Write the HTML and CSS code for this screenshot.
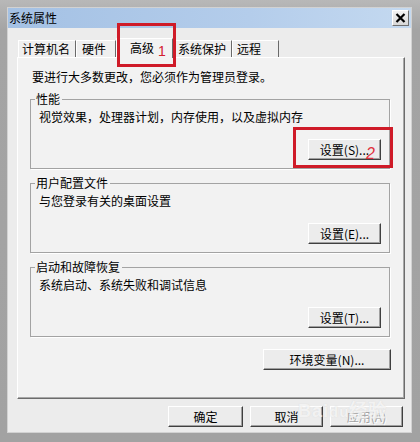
FILE: index.html
```html
<!DOCTYPE html>
<html lang="zh-CN">
<head>
<meta charset="utf-8">
<title>系统属性</title>
<link rel="stylesheet" href="styles.css">
</head>
<body>
<div class="screen">
  <div class="window">
    <div class="titlebar">
      <span class="title">系统属性</span>
      <button class="close" aria-label="关闭"><svg width="11" height="10" viewBox="0 0 11 10"><path d="M1.5 1 L9.5 9 M9.5 1 L1.5 9" stroke="#000" stroke-width="2.2" fill="none"/></svg></button>
    </div>
    <div class="body">
      <div class="tabs">
        <div class="tab t1">计算机名</div>
        <div class="tab t2">硬件</div>
        <div class="tab sel">高级</div>
        <div class="tab t4">系统保护</div>
        <div class="tab t5">远程</div>
      </div>
      <div class="panel">
        <p class="intro">要进行大多数更改，您必须作为管理员登录。</p>
        <fieldset class="group">
          <legend>性能</legend>
          <p class="desc">视觉效果，处理器计划，内存使用，以及虚拟内存</p>
          <div class="btnrow"><button class="btn">设置(S)...</button></div>
        </fieldset>
        <fieldset class="group">
          <legend>用户配置文件</legend>
          <p class="desc">与您登录有关的桌面设置</p>
          <div class="btnrow"><button class="btn">设置(E)...</button></div>
        </fieldset>
        <fieldset class="group">
          <legend>启动和故障恢复</legend>
          <p class="desc">系统启动、系统失败和调试信息</p>
          <div class="btnrow"><button class="btn">设置(T)...</button></div>
        </fieldset>
        <div class="envrow"><button class="btn env">环境变量(N)...</button></div>
      </div>
      <div class="footer">
        <button class="btn ok">确定</button>
        <button class="btn">取消</button>
        <button class="btn" disabled>应用(A)</button>
      </div>
    </div>
  </div>
  <div class="mark mark1"><span class="num">1</span></div>
  <div class="mark mark2"><span class="num two">2</span></div>
  <div class="watermark">Bai<span class="du">du</span>经验</div>
</div>
</body>
</html>
```
FILE: styles.css
```css
* { box-sizing: border-box; }
html, body { margin: 0; padding: 0; }
body {
  width: 420px;
  height: 442px;
  overflow: hidden;
  font-family: "Noto Sans CJK SC", "Noto Sans", sans-serif;
  font-size: 12px;
  color: #000;
  background: #a6a6a6;
}
.screen {
  position: relative;
  width: 420px;
  height: 442px;
  padding: 7px 8px 9px 7px;
  background: linear-gradient(#b8b8b8, #a4a4a4 30px, #a2a2a2);
}
.window {
  height: 426px;
  display: flex;
  flex-direction: column;
  background: #ececec;
  border: 1px solid #d2d2d2;
}
.titlebar {
  height: 20px;
  display: flex;
  align-items: center;
  justify-content: space-between;
  padding: 0 2px 0 1px;
  background: linear-gradient(to right, #a4c1e4, #b4cdeb 60%, #c4d9f0);
}
.title { line-height: 16px; }
.close {
  width: 17px;
  height: 16px;
  padding: 0;
  display: flex;
  align-items: center;
  justify-content: center;
  background: linear-gradient(#f2f2f2, #d8d8d8);
  border: 1px solid;
  border-color: #fff #707070 #707070 #fff;
}
.body {
  flex: 1;
  display: flex;
  flex-direction: column;
  padding: 10px 6px 5px 9px;
}
.tabs {
  height: 19px;
  display: flex;
  align-items: flex-end;
  padding-left: 1px;
}
.tab {
  height: 17px;
  line-height: 16px;
  white-space: nowrap;
  background: #efefef;
  border-top: 1px solid #fff;
  border-left: 1px solid #fff;
  border-right: 1px solid #6a6a6a;
  padding-left: 5px;
}
.t1 { width: 58px; padding-left: 3px; }
.t2 { width: 40px; padding-left: 5px; }
.t4 { width: 59px; padding-left: 4px; }
.t5 { width: 47px; padding-left: 4px; }
.sel {
  width: 57px;
  height: 20px;
  padding-left: 13px;
  line-height: 18px;
  margin-bottom: -1px;
  background: #f2f2f2;
  position: relative;
  z-index: 1;
}
.panel {
  flex: 1;
  background: #f2f2f2;
  border-top: 1px solid #fff;
  border-left: 1px solid #fff;
  border-right: 1px solid #6c6c6c;
  border-bottom: 1px solid #6c6c6c;
  box-shadow: inset -1px -1px 0 #a8a8a8;
  padding: 11px 14px 0 12px;
}
.intro {
  margin: 0;
  padding-left: 2px;
  line-height: 16px;
}
.group {
  margin: 6px 0 0;
  padding: 0 8px 8px 8px;
  border: 1px solid #a3a3a3;
  box-shadow: 1px 1px 0 #fff;
  min-width: 0;
}
.group legend {
  padding: 0 2px 0 1px;
  margin-left: -4px;
  line-height: 16px;
}
.desc {
  margin: 2px 0 0;
  line-height: 16px;
  white-space: nowrap;
}
.btnrow {
  display: flex;
  justify-content: flex-end;
  margin-top: 14px;
}
.btn {
  width: 73px;
  height: 21px;
  padding: 0;
  font: inherit;
  line-height: 18px;
  color: #000;
  background: #ececec;
  border: 1px solid;
  border-color: #fff #404040 #404040 #fff;
  box-shadow: inset -1px -1px 0 #a0a0a0;
  white-space: nowrap;
}
.btn:disabled {
  color: #a3a3a3;
  text-shadow: 1px 1px 0 #fff;
}
.envrow {
  display: flex;
  justify-content: flex-end;
  margin: 12px -1px 0 0;
}
.env { width: 128px; }
.footer {
  display: flex;
  justify-content: flex-end;
  gap: 7px;
  margin-top: 7px;
  padding-right: 2px;
}
.ok { width: 75px; }
.mark {
  position: absolute;
  z-index: 5;
  border: 3px solid #cf1b28;
}
.mark1 { left: 117px; top: 23px; width: 59px; height: 44px; }
.mark2 { left: 293px; top: 127px; width: 100px; height: 41px; }
.num {
  position: absolute;
  font-family: "Liberation Sans", sans-serif;
  color: #d3202e;
  line-height: 1;
}
.mark1 .num { left: 38px; top: 18px; font-size: 14px; }
.two { left: 70px; top: 16px; font-size: 16px; font-style: italic; color: #e0303e; }
.watermark {
  position: absolute;
  z-index: 6;
  left: 298px;
  top: 396px;
  font-family: "Liberation Sans", sans-serif;
  font-size: 18px;
  font-weight: bold;
  letter-spacing: 1px;
  color: rgba(255, 255, 255, 0.7);
  text-shadow: 0 0 1px rgba(190, 190, 190, 0.5);
}
.du { font-size: 15px; }
```
